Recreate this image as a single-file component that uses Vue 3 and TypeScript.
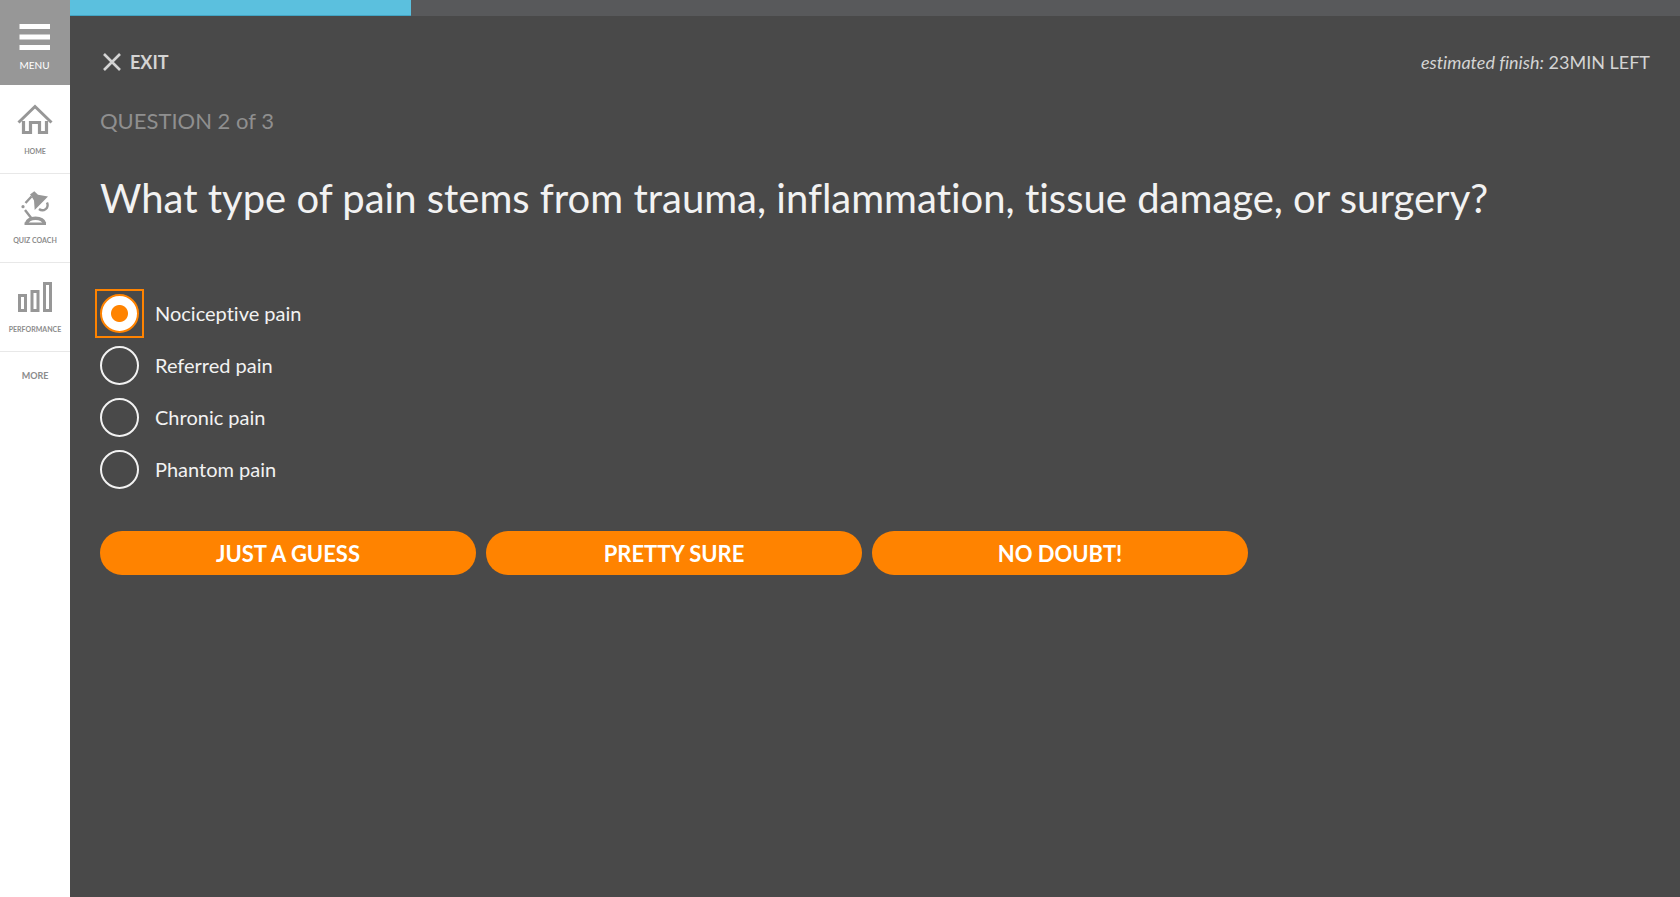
<script setup lang="ts">
import { ref } from 'vue'

const options: string[] = ['Nociceptive pain', 'Referred pain', 'Chronic pain', 'Phantom pain']
const confidence: string[] = ['JUST A GUESS', 'PRETTY SURE', 'NO DOUBT!']
const selected = ref<string>(options[0])
const progress = ref<number>(21.2)
</script>

<template>
  <div class="app">
    <nav class="sidebar" aria-label="Main">
      <button class="menu" type="button">
        <svg width="32" height="28" viewBox="0 0 32 28" aria-hidden="true">
          <path d="M0.500 1h30.500v5h-30.500zM0.500 11.500h30.500v5h-30.500zM0.500 22h30.500v5h-30.500z" fill="#fff" />
        </svg>
        <span>MENU</span>
      </button>
      <a class="item" href="#home">
        <svg width="36" height="34" viewBox="0 0 36 34" fill="none" stroke="#979797" aria-hidden="true">
          <path d="M1.500 20.500L18 4.500L34.500 20.500" stroke-width="3" />
          <path d="M6.500 19v11.500h7v-10h9v10h7v-11.500" stroke-width="3.200" />
        </svg>
        <span>HOME</span>
      </a>
      <a class="item" href="#quiz-coach">
        <svg width="36" height="36" viewBox="0 0 36 36" aria-hidden="true">
          <path d="M13 3.500L17.300 0.300L21 3.800L31 5.500L17.700 19L17 9.500L15.500 7z" fill="#979797" />
          <path d="M14.500 5.500L8.500 12M8 19L14.200 27" fill="none" stroke="#979797" stroke-width="2.400" />
          <circle cx="6" cy="15.700" r="1.600" fill="#979797" />
          <path d="M30 11.500C32.500 17 26.500 21.500 22 18" fill="none" stroke="#979797" stroke-width="2.400" />
          <path d="M9.500 32.500C11.500 25.500 25.500 25.500 27.500 32.500" fill="none" stroke="#979797" stroke-width="3.600" />
          <path d="M7.500 31.500h21.500v2.500h-21.500z" fill="#979797" />
        </svg>
        <span>QUIZ COACH</span>
      </a>
      <a class="item" href="#performance">
        <svg width="36" height="36" viewBox="0 0 36 36" fill="none" stroke="#979797" stroke-width="3" aria-hidden="true">
          <path d="M2.500 15.500h6v15h-6zM15 11.500h6v19h-6zM27.500 3.500h6v27h-6z" />
        </svg>
        <span>PERFORMANCE</span>
      </a>
      <button class="more" type="button">MORE</button>
    </nav>

    <main class="content">
      <div class="track" role="progressbar" :aria-valuenow="progress" aria-label="Quiz progress">
        <div class="fill" :style="{ width: progress + '%' }"></div>
      </div>
      <div class="page">
        <header class="top">
          <button class="exit" type="button">
            <svg width="18" height="18" viewBox="0 0 18 18" aria-hidden="true">
              <path d="M1 1L17 17M17 1L1 17" stroke="#d4d4d4" stroke-width="2.600" />
            </svg>
            <span>EXIT</span>
          </button>
          <p class="estimate"><em>estimated finish:</em> 23MIN LEFT</p>
        </header>
        <p class="count">QUESTION 2 of 3</p>
        <h1 id="question">What type of pain stems from trauma, inflammation, tissue damage, or surgery?</h1>
        <div class="options" role="radiogroup" aria-labelledby="question">
          <label v-for="option in options" :key="option" class="option">
            <span class="ring" :class="{ active: selected === option }">
              <input v-model="selected" type="radio" name="answer" :value="option" />
            </span>
            <span>{{ option }}</span>
          </label>
        </div>
        <div class="actions">
          <button v-for="label in confidence" :key="label" type="button">{{ label }}</button>
        </div>
      </div>
    </main>
  </div>
</template>

<style>
body {
  margin: 0;
  background: #494949;
}
</style>

<style scoped>
* {
  box-sizing: border-box;
}
.app {
  display: flex;
  min-height: 100vh;
  background: #494949;
  font-family: Lato, "Open Sans", sans-serif;
  font-variant-ligatures: none;
}
button {
  margin: 0;
  padding: 0;
  border: 0;
  background: none;
  font-family: inherit;
  cursor: pointer;
}
svg {
  display: block;
}
.sidebar {
  flex: 0 0 70px;
  display: flex;
  flex-direction: column;
  background: #fff;
}
.menu {
  display: flex;
  flex-direction: column;
  align-items: center;
  gap: 7px;
  height: 85px;
  padding-top: 23px;
  padding-right: 1px;
  background: #979797;
  color: #fff;
  font-size: 10px;
  line-height: 14px;
}
.item {
  display: flex;
  flex-direction: column;
  align-items: center;
  justify-content: space-between;
  height: 89px;
  padding: 17px 0 16px;
  border-bottom: 1px solid #e8e8e8;
  color: #8c8c8c;
  font-size: 7px;
  font-weight: 700;
  line-height: 12px;
  text-decoration: none;
}
.more {
  height: 46px;
  color: #8c8c8c;
  font-size: 9px;
  font-weight: 700;
}
.content {
  flex: 1;
  min-width: 0;
}
.track {
  height: 16px;
  background: #58595b;
}
.fill {
  height: 100%;
  border-bottom: 1px solid #43a5c4;
  background: #5bc0de;
}
.page {
  padding: 32px 30px;
}
.top {
  display: flex;
  align-items: center;
  justify-content: space-between;
  height: 28px;
}
.exit {
  display: flex;
  align-items: center;
  gap: 9px;
  padding-left: 3px;
  color: #d4d4d4;
  font-size: 18px;
  font-weight: 700;
  line-height: 28px;
}
.estimate {
  margin: 0;
  color: #d4d4d4;
  font-size: 18px;
  line-height: 26px;
}
.count {
  margin: 30px 0 0;
  color: #8f8f8f;
  font-size: 22px;
  line-height: 30px;
}
h1 {
  margin: 38px 0 0;
  color: #f2f2f2;
  font-size: 40px;
  font-weight: 400;
  line-height: 48px;
}
.options {
  display: flex;
  flex-direction: column;
  align-items: flex-start;
  gap: 13px;
  margin-top: 72px;
}
.option {
  display: flex;
  align-items: center;
  gap: 16px;
  color: #f2f2f2;
  font-size: 20px;
  line-height: 39px;
  cursor: pointer;
}
.ring {
  display: flex;
}
.ring.active {
  outline: 2px solid #ff8300;
  outline-offset: 3px;
}
.option input {
  appearance: none;
  flex: none;
  width: 39px;
  height: 39px;
  margin: 0;
  border: 2px solid #f2f2f2;
  border-radius: 50%;
  outline: none;
}
.option input:checked {
  border-color: #ff8300;
  background: radial-gradient(circle, #ff8300 8px, #fff 9px);
}
.actions {
  display: flex;
  gap: 10px;
  max-width: 1148px;
  margin-top: 42px;
}
.actions button {
  flex: 1;
  height: 44px;
  border-radius: 22px;
  background: #ff8300;
  color: #fff;
  font-size: 22px;
  font-weight: 700;
}
</style>
